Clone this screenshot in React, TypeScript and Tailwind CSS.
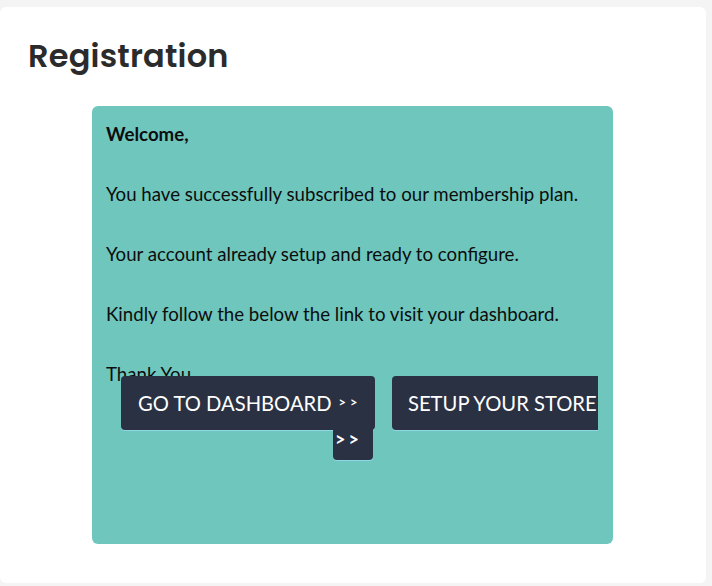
export default function App() {
  const lines = [
    'You have successfully subscribed to our membership plan.',
    'Your account already setup and ready to configure.',
    'Kindly follow the below the link to visit your dashboard.',
  ]

  return (
    <div className="min-h-[586px] bg-[#f4f4f4] pt-[7px] pr-[6px] pb-[3px]">
      <div className="h-[576px] rounded-[6px] bg-white">
        <h1 className="pl-[28px] pt-[29px] text-[32px] font-semibold leading-[40px] tracking-[0.2px] text-[#2b2b2b] font-['Poppins',_'Inter',_sans-serif]">
          Registration
        </h1>

        <div className="ml-[92px] mt-[30px] h-[438px] w-[521px] rounded-[6px] bg-[#6ec6bd] px-[14px] pt-[13px] text-[18.67px] leading-[30px] text-[#0d0d0d] font-['Lato',_'Liberation_Sans',_sans-serif]">
          <p className="font-bold">Welcome,</p>
          {lines.map((line) => (
            <p key={line} className="mt-[30px]">{line}</p>
          ))}
          <p className="mt-[30px]">Thank You</p>

          <div className="-mt-[13px] flex h-[90px] items-start pl-[15px]">
            <div className="relative shrink-0">
              <div className="flex h-[54px] w-[254px] items-center rounded-[4px] bg-[#2a3143] pl-[17px] text-[20.2px] text-white shadow-[0_1px_0_#8fd6e6]">
                <span>GO TO DASHBOARD</span>
                <span className="ml-[7px] -mt-[3px] text-[13px] font-bold tracking-[4px]">&gt;&gt;</span>
              </div>
              <div className="absolute left-[212px] top-[52px] h-[32px] w-[40px] rounded-b-[4px] bg-[#2a3143] pl-[2px] text-[18px] font-bold leading-[22px] tracking-[3px] text-white shadow-[0_1px_0_#8fd6e6]">
                &gt;&gt;
              </div>
            </div>
            <div className="ml-[17px] flex h-[54px] w-[206px] shrink-0 items-center whitespace-nowrap rounded-l-[4px] bg-[#2a3143] pl-[16px] text-[20.2px] text-white shadow-[0_1px_0_#8fd6e6]">
              SETUP YOUR STORE
            </div>
          </div>
        </div>
      </div>
    </div>
  )
}
